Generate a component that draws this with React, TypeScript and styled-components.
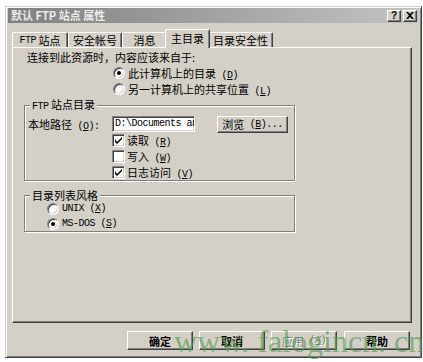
import React from "react";
import styled, { createGlobalStyle } from "styled-components";

const FACE = "#d4d0c8";
const UI_FONT = `"Noto Sans CJK SC", sans-serif`;

const Global = createGlobalStyle`
  html, body { margin: 0; padding: 0; background: #fff; }
  body {
    width: 423px; height: 362px; overflow: hidden;
    font-family: ${UI_FONT};
    -webkit-font-smoothing: none;
  }
`;

const Window = styled.div`
  position: relative;
  box-sizing: border-box;
  margin: 6px 0 0 5px;
  width: 417px;
  height: 352px;
  background: ${FACE};
  border: 1px solid;
  border-color: ${FACE} #404040 #404040 ${FACE};
  box-shadow: inset 1px 1px #fff, inset -1px -1px #808080;
  padding: 1px 2px 0 2px;
  display: flex;
  flex-direction: column;
  font-size: 11px;
  color: #000;
`;

const TitleBar = styled.div`
  height: 15px;
  display: flex;
  align-items: center;
  padding-left: 3px;
  background: linear-gradient(to right, #808080, #c4c4c4);
`;

const TitleText = styled.div`
  flex: 1;
  font-family: "Noto Sans CJK SC", sans-serif;
  font-weight: bold;
  font-size: 11px;
  line-height: 15px;
  color: #ececec;
  white-space: pre;
`;

const CaptionButton = styled.div`
  box-sizing: border-box;
  width: 14px;
  height: 12px;
  margin-left: 2px;
  background: ${FACE};
  border: 1px solid;
  border-color: #fff #404040 #404040 #fff;
  box-shadow: inset -1px -1px #808080;
  display: flex;
  align-items: center;
  justify-content: center;
  font-family: "Liberation Sans", sans-serif;
  font-weight: bold;
  font-size: 10px;
  line-height: 10px;
  &:last-child { margin-right: 2px; }
`;

const TabStrip = styled.div`
  position: relative;
  z-index: 1;
  margin: 6px 0 0 4px;
  height: 18px;
  display: flex;
  align-items: flex-end;
`;

const Tab = styled.div<{ $w: number; $active?: boolean }>`
  box-sizing: border-box;
  width: ${(p) => (p.$active ? p.$w + 4 : p.$w)}px;
  height: ${(p) => (p.$active ? 19 : 15)}px;
  margin: ${(p) => (p.$active ? "0 -2px -1px -2px" : "0")};
  position: relative;
  z-index: ${(p) => (p.$active ? 2 : 1)};
  background: ${FACE};
  border-top: 1px solid #fff;
  border-left: 1px solid #fff;
  border-right: 1px solid #404040;
  border-radius: 2px 2px 0 0;
  box-shadow: inset -1px 0 #808080;
  display: flex;
  align-items: center;
  justify-content: center;
  padding-bottom: ${(p) => (p.$active ? 2 : 0)}px;
  font-size: 11px;
  white-space: pre;
`;

const Panel = styled.div`
  box-sizing: border-box;
  margin-left: 4px;
  width: 400px;
  height: 276px;
  border: 1px solid;
  border-color: #fff #404040 #404040 #fff;
  box-shadow: inset -1px -1px #808080;
  padding-top: 1px;
  display: flex;
  flex-direction: column;
`;

const Line = styled.div<{ $indent: number; $h?: number }>`
  height: ${(p) => p.$h ?? 16}px;
  padding-left: ${(p) => p.$indent}px;
  display: flex;
  align-items: center;
  white-space: pre;
`;

const Group = styled.fieldset<{ $top?: number }>`
  box-sizing: border-box;
  margin: ${(p) => p.$top ?? 0}px 0 0 11px;
  padding: 2px 0 0 0;
  min-width: 0;
  width: 271px;
  border: 1px solid #808080;
  box-shadow: inset 1px 1px #fff, 1px 1px #fff;
`;

const Legend = styled.legend`
  margin-left: 5px;
  padding: 0 2px;
  line-height: 14px;
  font-size: 11px;
  background: ${FACE};
  white-space: pre;
`;

const LabelText = styled.span`
  white-space: pre;
`;

/* Latin run in the half-width serif mono look of the original UI font */
const L = styled.span`
  font-family: "Liberation Mono", monospace;
  font-size: 10px;
  letter-spacing: -0.5px;
`;

const Mn = styled.span`
  text-decoration: underline;
`;

const Radio = styled.span<{ $on?: boolean }>`
  box-sizing: border-box;
  width: 12px;
  height: 12px;
  margin-right: 3px;
  border-radius: 50%;
  border: 1px solid;
  border-color: #808080 #fff #fff #808080;
  box-shadow: inset 1px 1px #404040, inset -1px -1px ${FACE};
  background: #fff;
  position: relative;
  flex: none;
  &::after {
    content: "";
    display: ${(p) => (p.$on ? "block" : "none")};
    position: absolute;
    left: 3px;
    top: 3px;
    width: 4px;
    height: 4px;
    border-radius: 50%;
    background: #000;
  }
`;

const CheckBox = styled.span`
  box-sizing: border-box;
  width: 13px;
  height: 13px;
  margin-right: 2px;
  border: 1px solid;
  border-color: #808080 #fff #fff #808080;
  box-shadow: inset 1px 1px #404040, inset -1px -1px ${FACE};
  background: #fff;
  flex: none;
  display: flex;
  align-items: center;
  justify-content: center;
`;

const PathLabel = styled.span`
  width: 84px;
  padding-left: 3px;
  white-space: pre;
`;

const PathInput = styled.div`
  box-sizing: border-box;
  width: 83px;
  height: 16px;
  border: 1px solid;
  border-color: #808080 #fff #fff #808080;
  box-shadow: inset 1px 1px #404040, inset -1px -1px ${FACE};
  background: #fff;
  padding: 0 0 0 2px;
  line-height: 14px;
  overflow: hidden;
  white-space: pre;
  font-family: "Liberation Mono", monospace;
  font-size: 10px;
  letter-spacing: -0.5px;
`;

const Button = styled.div<{ $w: number; $h: number; $disabled?: boolean; $bold?: boolean }>`
  box-sizing: border-box;
  width: ${(p) => p.$w}px;
  height: ${(p) => p.$h}px;
  flex: none;
  background: ${FACE};
  border: 1px solid;
  border-color: #fff #404040 #404040 #fff;
  box-shadow: inset -1px -1px #808080;
  display: flex;
  align-items: center;
  justify-content: center;
  white-space: pre;
  font-size: 11px;
  font-weight: ${(p) => (p.$bold ? "bold" : "normal")};
  color: ${(p) => (p.$disabled ? "#808080" : "#000")};
  text-shadow: ${(p) => (p.$disabled ? "1px 1px #fff" : "none")};
`;

const BrowseRow = styled.div`
  height: 16px;
  display: flex;
  align-items: center;
`;

const ButtonBar = styled.div`
  margin-top: 8px;
  height: 19px;
  display: flex;
  justify-content: flex-end;
  gap: 6px;
  padding-right: 9px;
`;

const Watermark = styled.div`
  position: absolute;
  left: 168px;
  top: 318px;
  font-family: "Liberation Serif", serif;
  font-size: 32px;
  line-height: 32px;
  color: rgba(80, 155, 80, 0.65);
  white-space: pre;
  pointer-events: none;
`;

const Check = () => (
  <svg width="7" height="7" viewBox="0 0 7 7">
    <path d="M0 2 L0 5 L2 7 L7 2 L7 0 L2 5 Z" fill="#000" />
  </svg>
);

const tabs: { label: React.ReactNode; key: string; w: number; active?: boolean }[] = [
  { key: "ftp", label: <><L>FTP</L> 站点</>, w: 56 },
  { key: "acct", label: "安全帐号", w: 54 },
  { key: "msg", label: "消息", w: 45 },
  { key: "home", label: "主目录", w: 41, active: true },
  { key: "sec", label: "目录安全性", w: 65 },
];

export default function App() {
  return (
    <>
      <Global />
      <Window>
        <TitleBar>
          <TitleText>默认 FTP 站点 属性</TitleText>
          <CaptionButton>?</CaptionButton>
          <CaptionButton>
            <svg width="8" height="7" viewBox="0 0 8 7">
              <path d="M0 0 L2 0 L4 2 L6 0 L8 0 L5 3.5 L8 7 L6 7 L4 5 L2 7 L0 7 L3 3.5 Z" fill="#000" />
            </svg>
          </CaptionButton>
        </TitleBar>

        <TabStrip>
          {tabs.map((t) => (
            <Tab key={t.key} $w={t.w} $active={t.active}>
              {t.label}
            </Tab>
          ))}
        </TabStrip>

        <Panel>
          <Line $indent={14}>连接到此资源时，内容应该来自于:</Line>
          <Line $indent={100}>
            <Radio $on />
            <LabelText>
              此计算机上的目录<L> (<Mn>D</Mn>)</L>
            </LabelText>
          </Line>
          <Line $indent={100}>
            <Radio />
            <LabelText>
              另一计算机上的共享位置<L> (<Mn>L</Mn>)</L>
            </LabelText>
          </Line>

          <Group>
            <Legend>
              <L>FTP</L> 站点目录
            </Legend>
            <BrowseRow>
              <PathLabel>
                本地路径<L> (<Mn>O</Mn>):</L>
              </PathLabel>
              <PathInput>D:\Documents and Settings</PathInput>
              <Button $w={71} $h={17} style={{ marginLeft: 22 }}>
                浏览<L> (<Mn>B</Mn>)...</L>
              </Button>
            </BrowseRow>
            <Line $indent={87}>
              <CheckBox>
                <Check />
              </CheckBox>
              <LabelText>
                读取<L> (<Mn>R</Mn>)</L>
              </LabelText>
            </Line>
            <Line $indent={87}>
              <CheckBox />
              <LabelText>
                写入<L> (<Mn>W</Mn>)</L>
              </LabelText>
            </Line>
            <Line $indent={87}>
              <CheckBox>
                <Check />
              </CheckBox>
              <LabelText>
                日志访问<L> (<Mn>V</Mn>)</L>
              </LabelText>
            </Line>
          </Group>

          <Group $top={7}>
            <Legend>目录列表风格</Legend>
            <Line $indent={22} $h={15} style={{ marginTop: -3 }}>
              <Radio />
              <L>
                UNIX (<Mn>X</Mn>)
              </L>
            </Line>
            <Line $indent={22} $h={15}>
              <Radio $on />
              <L>
                MS-DOS (<Mn>S</Mn>)
              </L>
            </Line>
          </Group>
        </Panel>

        <ButtonBar>
          <Button $w={66} $h={19} $bold>确定</Button>
          <Button $w={66} $h={19} $bold>取消</Button>
          <Button $w={66} $h={19} $disabled>
            应用<L> (<Mn>A</Mn>)</L>
          </Button>
          <Button $w={66} $h={19} $bold style={{ marginLeft: 1 }}>
            帮助
          </Button>
        </ButtonBar>

        <Watermark>www. falogincn. cn</Watermark>
      </Window>
    </>
  );
}
